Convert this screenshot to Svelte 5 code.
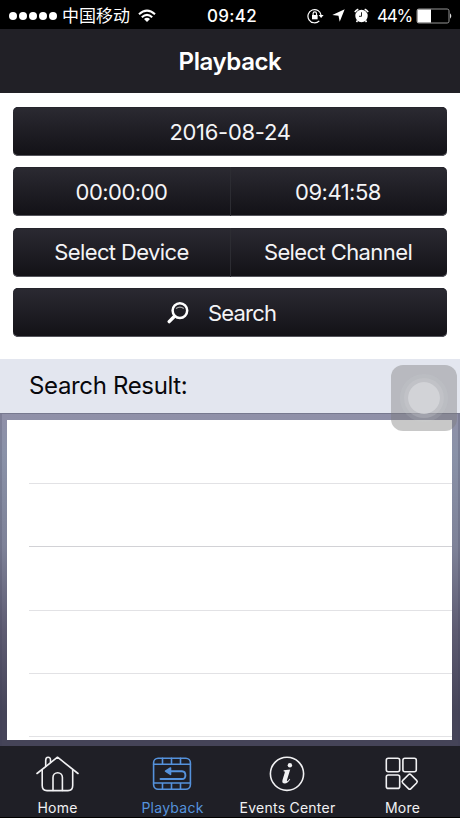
<script>
  const date = '2016-08-24';
  const rows = [1, 2, 3, 4, 5];

  const tabs = [
    { id: 'home', label: 'Home' },
    { id: 'playback', label: 'Playback' },
    { id: 'events', label: 'Events Center' },
    { id: 'more', label: 'More' }
  ];

  let activeTab = $state('playback');
</script>

<div class="screen">
  <div class="status">
    <div class="status-left">
      <div class="signal">
        {#each rows as dot}
          <i></i>
        {/each}
      </div>
      <span class="carrier">中国移动</span>
      <svg class="wifi" width="18" height="14" viewBox="0 0 18 14" fill="none" stroke="#fff" stroke-width="2.1">
        <path d="M1 5.2Q9-2 17 5.2" />
        <path d="M3.8 8.2Q9 3.6 14.2 8.2" />
        <path d="M9 13L6 10Q9 7.600 12 10Z" fill="#fff" stroke="none" />
      </svg>
    </div>
    <span class="clock">09:42</span>
    <div class="status-right">
      <svg width="17" height="16" viewBox="0 0 17 16" fill="none" stroke="#fff" stroke-width="1.2">
        <path d="M12.300 12.800A6.600 6.600 0 1 1 14.100 7.300" />
        <path d="M11.600 7h5l-2.500 3z" fill="#fff" stroke="none" />
        <rect x="5" y="7" width="5.600" height="4.300" fill="#fff" stroke="none" />
        <path d="M6.100 7V5.500a1.700 1.700 0 0 1 3.400 0V7" />
      </svg>
      <svg class="arrow" width="13" height="13" viewBox="0 0 13 13">
        <path d="M12.700 .3L7.700 12.700 6.500 6.800 .3 6z" fill="#fff" />
      </svg>
      <svg class="alarm" width="15" height="15" viewBox="0 0 15 15">
        <circle cx="7.500" cy="8" r="6.200" fill="#fff" />
        <path d="M.8 4.200A8 8 0 0 1 4.300 1.200M14.200 4.200A8 8 0 0 0 10.700 1.200M3.500 12.500L2.500 14M11.500 12.500l1 1.500" stroke="#fff" stroke-width="1.500" fill="none" />
        <path d="M7.500 4.300V8.300H5" stroke="#222" stroke-width="1" fill="none" />
      </svg>
      <span class="percent">44%</span>
      <svg width="36" height="16" viewBox="0 0 36 16">
        <rect x="1" y="1" width="32" height="14" rx="1.800" fill="none" stroke="#959595" />
        <rect x="1.500" y="1.500" width="13.500" height="13" fill="#fff" />
        <path d="M34 5.300q2.600 2.700 0 5.400z" fill="#ddd" />
      </svg>
    </div>
  </div>

  <header><h1>Playback</h1></header>

  <div class="form">
    <button class="bar date">{date}</button>
    <div class="bar split">
      <button class="time">00:00:00</button>
      <button class="time">09:41:58</button>
    </div>
    <div class="bar split">
      <button>Select Device</button>
      <button>Select Channel</button>
    </div>
    <button class="bar search">
      <svg width="22" height="22" viewBox="0 0 22 22" fill="none" stroke="#fff">
        <circle cx="12.900" cy="8.600" r="7.300" stroke-width="2.500" />
        <path d="M7.500 14.300L2.200 19.600" stroke-width="3.400" stroke-linecap="round" />
        <path d="M9 6.600Q12.900 3.600 16.800 6.600" stroke="#aaa" stroke-width="1.300" />
      </svg>
      <span>Search</span>
    </button>
  </div>

  <div class="result-title"><h2>Search Result:</h2></div>

  <div class="frame">
    <div class="list">
      {#each rows as row}
        <div class="row"></div>
      {/each}
    </div>
  </div>

  <nav>
    {#each tabs as tab}
      <button class="tab" class:active={activeTab === tab.id} onclick={() => (activeTab = tab.id)}>
        <svg width="44" height="38" viewBox="0 0 44 38" fill="none" stroke="currentColor" stroke-width="1.600" stroke-linecap="round" stroke-linejoin="round">
          {#if tab.id === 'home'}
            <path d="M2 18.500L22.500 2.200 43 18.500" />
            <path d="M7.200 14.800V30.500Q7.200 35.600 12 35.600H33Q37.700 35.600 37.700 30.500V14.800" />
            <path d="M18 35.500V22.500a4.700 4.700 0 0 1 9.400 0V35.500" />
            <path d="M10.700 11.500V5.500Q10.700 2.300 13.100 2.300T15.500 5V7.500" />
          {:else if tab.id === 'playback'}
            <rect x="3.600" y="3.200" width="36.800" height="31" rx="4.500" />
            <path d="M3.600 9.200H40.400M3.600 28H40.400M12.500 3.200v6M21.500 3.200v6M30.500 3.200v6M12.500 28v6M21.500 28v6M30.500 28v6" />
            <path d="M10.500 24H32Q35.400 24 35.400 20.200T32 16.200H20" stroke-width="1.900" />
            <path d="M15.500 16.200L20.500 13V19.400Z" fill="currentColor" />
          {:else if tab.id === 'events'}
            <circle cx="22" cy="18.800" r="16.600" />
            <circle cx="24.900" cy="10.200" r="2.200" fill="currentColor" stroke="none" />
            <path d="M18.700 15.200L25.200 14.400 22 25Q21.600 26.500 22.500 26 23.400 25.400 24.500 23.700L25.200 24.200Q22.500 28.500 19.800 28.500 16.600 28.500 17.500 25L19.800 17.600Q20.200 16.300 18.500 16.300Z" fill="currentColor" stroke="none" />
          {:else}
            <rect x="6.300" y="3.300" width="13.400" height="13.400" rx="2" />
            <rect x="22.900" y="3.300" width="13.400" height="13.400" rx="2" />
            <rect x="6.300" y="20" width="13.400" height="13.400" rx="2" />
            <rect x="23.900" y="20.900" width="11.600" height="11.600" rx="1.800" transform="rotate(45 29.700 26.700)" />
          {/if}
        </svg>
        <span>{tab.label}</span>
      </button>
    {/each}
  </nav>

  <div class="assistive"><div class="knob"></div></div>
</div>

<style>
  :global(body) {
    margin: 0;
    background: #fff;
  }

  .screen {
    position: relative;
    width: 460px;
    height: 818px;
    display: flex;
    flex-direction: column;
    overflow: hidden;
    background: #fff;
    font-family: Inter, "Noto Sans CJK SC", sans-serif;
  }

  button {
    margin: 0;
    padding: 0;
    border: 0;
    background: none;
    color: inherit;
    font: inherit;
    letter-spacing: inherit;
  }

  svg {
    display: block;
    flex: none;
  }

  .status {
    flex: none;
    height: 29px;
    box-sizing: border-box;
    padding: 2px 8px 0 9px;
    display: grid;
    grid-template-columns: 1fr auto 1fr;
    align-items: center;
    background: #000;
    color: #fff;
    font-size: 17px;
    line-height: 26px;
  }

  .status-left,
  .status-right,
  .signal {
    display: flex;
    align-items: center;
  }

  .signal {
    gap: 2px;
  }

  .signal i {
    width: 8px;
    height: 8px;
    border-radius: 50%;
    background: #fff;
  }

  .carrier {
    margin-left: 5px;
  }

  .wifi {
    margin-left: 8px;
  }

  .clock {
    padding-left: 3px;
    font-weight: 500;
    letter-spacing: 0.300px;
  }

  .status-right {
    justify-content: flex-end;
  }

  .arrow {
    margin-left: 8px;
  }

  .alarm {
    margin-left: 9px;
  }

  .percent {
    margin: 0 4px 0 8px;
    letter-spacing: -1.200px;
  }

  header {
    flex: none;
    height: 64px;
    display: flex;
    align-items: center;
    justify-content: center;
    background: #212026;
    color: #fff;
  }

  h1 {
    margin: 0;
    font-size: 24px;
    font-weight: 600;
    letter-spacing: -0.400px;
  }

  .form {
    flex: none;
    height: 266px;
    box-sizing: border-box;
    padding: 14px 13px 0;
    display: flex;
    flex-direction: column;
    gap: 11.400px;
    color: #f4f4f6;
    font-size: 22px;
    letter-spacing: -0.600px;
  }

  .bar {
    height: 49px;
    border-radius: 5px;
    background: linear-gradient(#2b2a32, #121116);
    box-shadow: inset 0 -1px #55555c, inset 0 1px #25242c;
  }

  .date {
    letter-spacing: -0.300px;
  }

  .time {
    letter-spacing: -0.500px;
  }

  .split {
    display: grid;
    grid-template-columns: 1fr 1fr;
  }

  .split button + button {
    padding-right: 2px;
    border-left: 1px solid #2c2c32;
  }

  .search {
    display: flex;
    align-items: center;
    padding-left: 154px;
    gap: 19px;
    letter-spacing: -0.800px;
  }

  .result-title {
    flex: none;
    height: 54px;
    display: flex;
    align-items: center;
    padding-left: 29px;
    background: #e3e6ef;
  }

  h2 {
    margin: 0 0 1px;
    font-size: 24px;
    font-weight: 400;
    letter-spacing: -0.350px;
    color: #08080c;
  }

  .frame {
    flex: none;
    height: 333px;
    box-sizing: border-box;
    padding: 7px 8px 6px 7px;
    background: linear-gradient(#9090a8, #8a92a8 12%, #7e8298 40%, #5e5c72 65%, #454458 90%);
    box-shadow: inset 0 1px #77798f, inset 2px 0 rgba(60, 60, 85, 0.2), inset -2px 0 rgba(60, 60, 85, 0.2);
  }

  .list {
    height: 320px;
    overflow: hidden;
    background: #fff;
  }

  .row {
    height: 63.250px;
    margin-left: 22px;
    box-sizing: border-box;
    border-bottom: 1px solid #e2e2e5;
  }

  .row:first-child {
    height: 64px;
  }

  .row:nth-child(2) {
    border-bottom-color: #d2d2d6;
  }

  nav {
    flex: none;
    height: 72px;
    box-sizing: border-box;
    border-bottom: 1px solid #000;
    display: grid;
    grid-template-columns: repeat(4, 1fr);
    background: #1f1f26;
    color: #f1f1f3;
  }

  .tab {
    display: flex;
    flex-direction: column;
    align-items: center;
    padding-top: 9px;
    font-size: 14px;
    line-height: 18px;
    white-space: nowrap;
  }

  .tab svg {
    margin-right: 1px;
  }

  .tab span {
    margin: 6px 0 0;
    letter-spacing: 0.250px;
  }

  .tab.active {
    color: #5592dc;
  }

  .assistive {
    position: absolute;
    left: 391px;
    top: 365px;
    width: 66px;
    height: 66px;
    border-radius: 12px;
    display: flex;
    align-items: center;
    justify-content: center;
    background: rgba(125, 125, 125, 0.42);
  }

  .knob {
    width: 32px;
    height: 32px;
    border-radius: 50%;
    background: rgba(214, 215, 219, 0.85);
    box-shadow: 0 0 0 4px rgba(210, 212, 216, 0.25), 0 0 0 8px rgba(210, 212, 216, 0.15);
  }
</style>
